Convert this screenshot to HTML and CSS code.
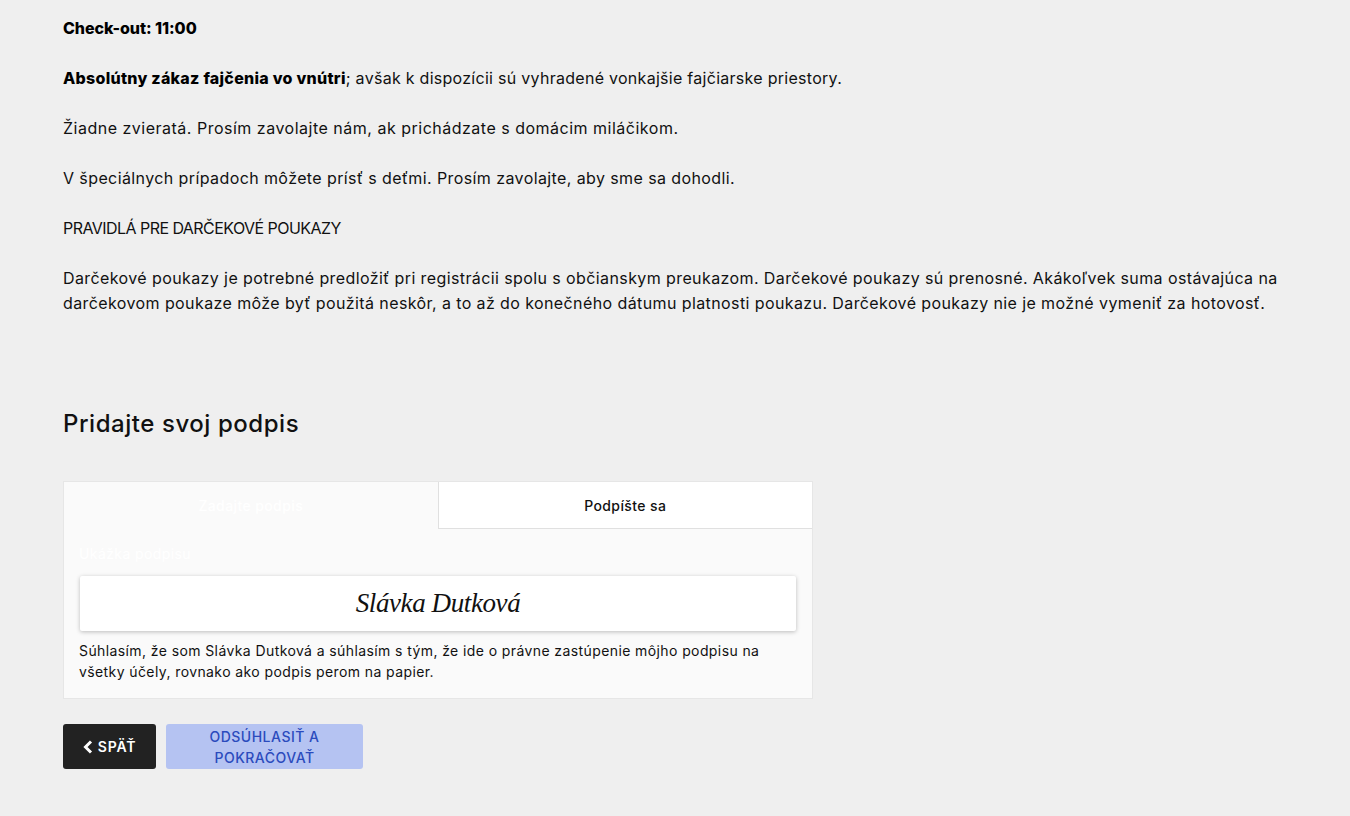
FILE: index.html
```html
<!DOCTYPE html>
<html lang="en">
<head>
    <meta charset="UTF-8">
    <meta name="viewport" content="width=device-width, initial-scale=1.0">
    <title>Pridajte svoj podpis</title>
    <link rel="stylesheet" href="styles.css">
</head>
<body>
    <div class="terms">
        <p><b class="tight">Check-out: 11:00</b></p>
        <p class="smoke"><b>Absolútny zákaz fajčenia vo vnútri</b>; avšak k dispozícii sú vyhradené vonkajšie fajčiarske priestory.</p>
        <p class="pets">Žiadne zvieratá. Prosím zavolajte nám, ak prichádzate s domácim miláčikom.</p>
        <p>V špeciálnych prípadoch môžete prísť s deťmi. Prosím zavolajte, aby sme sa dohodli.</p>
        <p class="caps">PRAVIDLÁ PRE DARČEKOVÉ POUKAZY</p>
        <p>Darčekové poukazy je potrebné predložiť pri registrácii spolu s občianskym preukazom. Darčekové poukazy sú prenosné. Akákoľvek suma ostávajúca na<br>darčekovom poukaze môže byť použitá neskôr, a to až do konečného dátumu platnosti poukazu. Darčekové poukazy nie je možné vymeniť za hotovosť.</p>
    </div>

    <h2 class="heading">Pridajte svoj podpis</h2>

    <div class="sign-box">
        <div class="tabs">
            <div class="tab active">Zadajte podpis</div>
            <div class="tab">Podpíšte sa</div>
        </div>
        <div class="sign-body">
            <div class="preview-label">Ukážka podpisu</div>
            <div class="preview">Slávka Dutková</div>
            <div class="consent">Súhlasím, že som Slávka Dutková a súhlasím s tým, že ide o právne zastúpenie môjho podpisu na<br>všetky účely, rovnako ako podpis perom na papier.</div>
        </div>
    </div>

    <div class="actions">
        <div class="btn back">
            <svg class="chevron" width="10" height="14" viewBox="0 0 10 14"><path d="M8 1.5 2.5 7 8 12.5" fill="none" stroke="#fff" stroke-width="3"/></svg>
            SPÄŤ
        </div>
        <div class="btn agree">ODSÚHLASIŤ A POKRAČOVAŤ</div>
    </div>
</body>
</html>
```

FILE: styles.css
```css
body {
    margin: 0;
    padding: 16px 63px 47px;
    background-color: #efefef;
    color: #111;
    font-family: Inter, "Noto Sans", sans-serif;
    font-size: 16px;
    line-height: 25px;
    letter-spacing: 0.4px;
}
.terms {
    height: 300px;
}
.terms p {
    margin: 0 0 25px;
    white-space: nowrap;
}
.terms b {
    color: #000;
    font-weight: 800;
    letter-spacing: 0.27px;
}
.terms b.tight {
    letter-spacing: -0.05px;
}
.terms p.smoke {
    letter-spacing: 0.28px;
}
.terms p.pets {
    letter-spacing: 0.5px;
}
.terms p.caps {
    letter-spacing: -0.55px;
}
.heading {
    margin: 0;
    padding-top: 93px;
    height: 71px;
    font-size: 24px;
    line-height: 30px;
    font-weight: 500;
    color: #111;
    letter-spacing: 0.55px;
}
.sign-box {
    width: 748px;
    margin-top: 1px;
    background: #fafafa;
    border: 1px solid #e6e6e6;
}
.tabs {
    display: flex;
    height: 47px;
}
.tab {
    flex: 1;
    display: flex;
    justify-content: center;
    align-items: center;
    font-size: 14px;
    font-weight: 500;
    color: #111;
    background: #fff;
    border-left: 1px solid #e0e0e0;
    border-bottom: 1px solid #e0e0e0;
}
.tab.active {
    color: #fff;
    background: transparent;
    border: 0;
}
.sign-body {
    padding: 12px 15px 16px;
}
.preview-label {
    color: #fff;
    font-size: 14px;
    line-height: 25px;
}
.preview {
    margin: 10px 1px 0;
    height: 55px;
    background: #fff;
    border-radius: 2px;
    box-shadow: 0 1px 4px rgba(0,0,0,0.25);
    display: flex;
    justify-content: center;
    align-items: center;
    font-family: "Liberation Serif", serif;
    font-style: italic;
    font-size: 27px;
    letter-spacing: -0.4px;
    color: #111;
}
.consent {
    margin-top: 9px;
    font-size: 14px;
    line-height: 21px;
    white-space: nowrap;
}
.actions {
    display: flex;
    gap: 10px;
    margin-top: 25px;
}
.btn {
    height: 45px;
    display: flex;
    justify-content: center;
    align-items: center;
    text-align: center;
    border-radius: 3px;
    font-size: 14px;
    line-height: 21px;
    font-weight: 600;
    letter-spacing: 0.5px;
}
.btn.back {
    width: 93px;
    gap: 5px;
    background: #222;
    color: #fff;
    letter-spacing: 0.8px;
}
.btn.agree {
    width: 197px;
    padding: 0 30px;
    box-sizing: border-box;
    background: #b5c3f2;
    color: #2b4bbd;
    font-weight: 500;
}
```
